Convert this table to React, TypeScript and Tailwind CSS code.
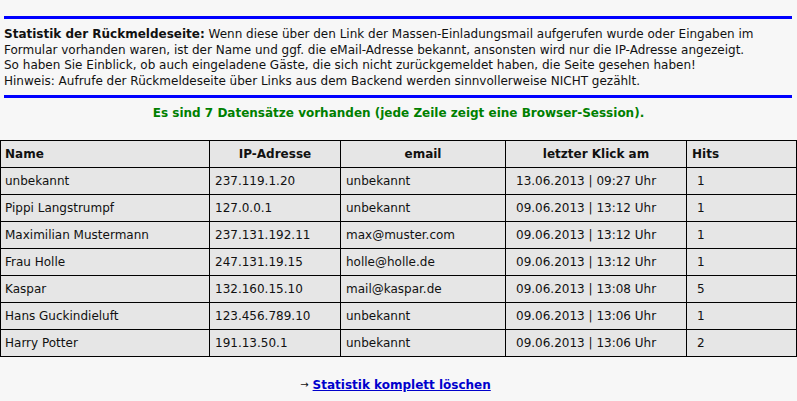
const rows = [
  { name: "unbekannt", ip: "237.119.1.20", email: "unbekannt", date: "13.06.2013 | 09:27 Uhr", hits: 1 },
  { name: "Pippi Langstrumpf", ip: "127.0.0.1", email: "unbekannt", date: "09.06.2013 | 13:12 Uhr", hits: 1 },
  { name: "Maximilian Mustermann", ip: "237.131.192.11", email: "max@muster.com", date: "09.06.2013 | 13:12 Uhr", hits: 1 },
  { name: "Frau Holle", ip: "247.131.19.15", email: "holle@holle.de", date: "09.06.2013 | 13:12 Uhr", hits: 1 },
  { name: "Kaspar", ip: "132.160.15.10", email: "mail@kaspar.de", date: "09.06.2013 | 13:08 Uhr", hits: 5 },
  { name: "Hans Guckindieluft", ip: "123.456.789.10", email: "unbekannt", date: "09.06.2013 | 13:06 Uhr", hits: 1 },
  { name: "Harry Potter", ip: "191.13.50.1", email: "unbekannt", date: "09.06.2013 | 13:06 Uhr", hits: 2 },
];

const App = () => {
  return (
    <div className="min-h-[401px] bg-[#f7f7f7] text-[12px] text-[#111] font-['DejaVu_Sans',Verdana,sans-serif]">
      <div className="pt-4 pl-1 pr-[5px]">
        <div className="h-[3px] bg-[#0000ff]" />
        <div className="pt-[8px] pb-[6px] leading-[15.5px] whitespace-nowrap">
          <div>
            <b>Statistik der Rückmeldeseite:</b> Wenn diese über den Link der Massen-Einladungsmail aufgerufen wurde oder Eingaben im
          </div>
          <div>Formular vorhanden waren, ist der Name und ggf. die eMail-Adresse bekannt, ansonsten wird nur die IP-Adresse angezeigt.</div>
          <div>So haben Sie Einblick, ob auch eingeladene Gäste, die sich nicht zurückgemeldet haben, die Seite gesehen haben!</div>
          <div>Hinweis: Aufrufe der Rückmeldeseite über Links aus dem Backend werden sinnvollerweise NICHT gezählt.</div>
        </div>
        <div className="h-[3px] bg-[#0000ff]" />
      </div>

      <p className="mt-[8px] text-center font-bold text-[#008000] leading-[15px]">
        Es sind 7 Datensätze vorhanden (jede Zeile zeigt eine Browser-Session).
      </p>

      <table className="mt-[19px] w-full border-collapse table-fixed">
        <colgroup>
          <col className="w-[209px]" />
          <col className="w-[131px]" />
          <col className="w-[165px]" />
          <col className="w-[181px]" />
          <col />
        </colgroup>
        <thead>
          <tr className="h-[27px] bg-[#e6e6e6] font-bold">
            <th className="border border-black text-left pl-1">Name</th>
            <th className="border border-black text-center">IP-Adresse</th>
            <th className="border border-black text-center">email</th>
            <th className="border border-black text-center">letzter Klick am</th>
            <th className="border border-black text-left pl-[5px]">Hits</th>
          </tr>
        </thead>
        <tbody>
          {rows.map((r) => (
            <tr key={r.name} className="h-[27px] bg-[#e6e6e6]">
              <td className="border border-black pl-1">{r.name}</td>
              <td className="border border-black pl-[5px]">{r.ip}</td>
              <td className="border border-black pl-[5px]">{r.email}</td>
              <td className="border border-black pl-[10px]">{r.date}</td>
              <td className="border border-black pl-[10px]">{r.hits}</td>
            </tr>
          ))}
        </tbody>
      </table>

      <div className="mt-[19px] flex items-center justify-center gap-[4px] pr-[6px]">
        <span className="text-[10px] leading-none">→</span>
        <a href="#" className="font-bold text-[#0000cc] underline">
          Statistik komplett löschen
        </a>
      </div>
    </div>
  );
};

export default App;
